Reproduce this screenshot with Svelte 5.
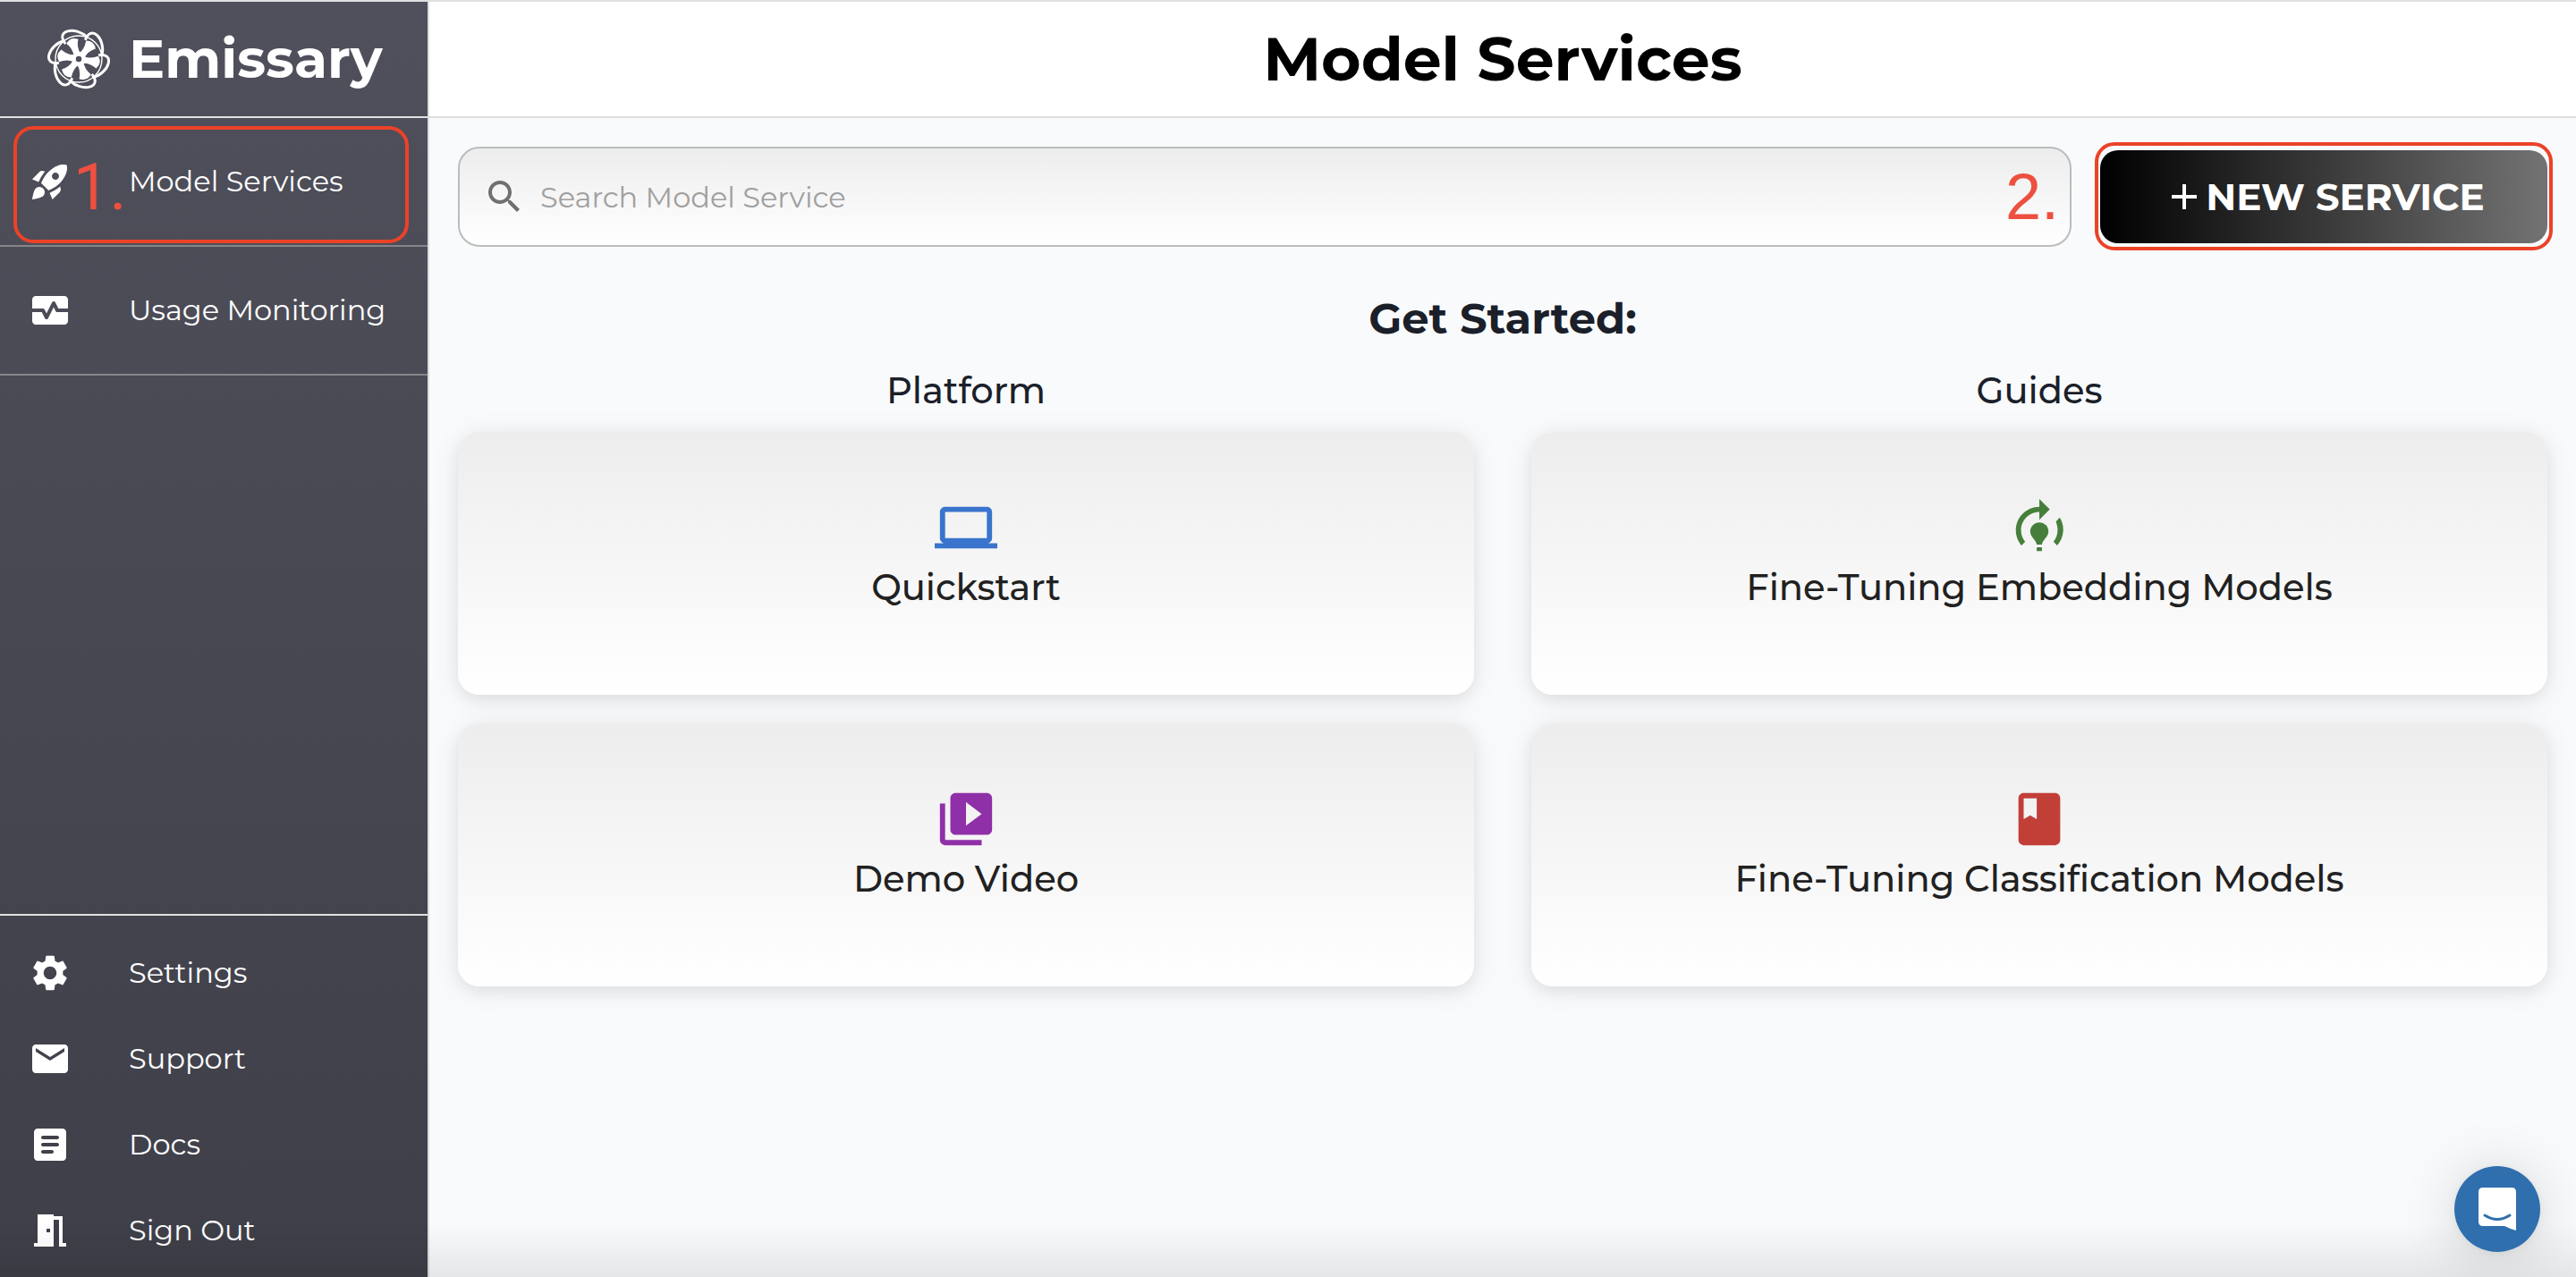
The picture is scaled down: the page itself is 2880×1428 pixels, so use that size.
<script>
  const mainLinks = [
    {
      label: 'Model Services',
      path: 'M9.19 6.35c-2.04 2.29-3.44 5.58-3.57 5.89L2 10.69l4.05-4.05c.47-.47 1.15-.68 1.81-.55l1.33.26zM11.17 17s3.74-1.55 5.89-3.7c5.4-5.4 4.5-9.62 4.21-10.57-.95-.3-5.17-1.19-10.57 4.21C8.55 9.09 7 12.83 7 12.83L11.17 17zm6.48-2.19c-2.29 2.04-5.58 3.44-5.89 3.57L13.31 22l4.05-4.05c.47-.47.68-1.15.55-1.81l-.26-1.33zM9 18c0 .83-.34 1.58-.88 2.12C6.94 21.3 2 22 2 22s.7-4.94 1.88-6.12A2.996 2.996 0 0 1 9 18zm4-9c0-1.1.9-2 2-2s2 .9 2 2-.9 2-2 2-2-.9-2-2z',
      step: '1.'
    },
    {
      label: 'Usage Monitoring',
      path: 'M15.11 12.45 14 10.24l-3.11 6.21c-.16.34-.51.55-.89.55s-.73-.21-.89-.55L7.38 13H2v5c0 1.1.9 2 2 2h16c1.1 0 2-.9 2-2v-5h-6c-.38 0-.73-.21-.89-.55zM20 4H4c-1.1 0-2 .9-2 2v5h6c.38 0 .73.21.89.55L10 13.76l3.11-6.21c.34-.68 1.45-.68 1.79 0L16.62 11H22V6c0-1.1-.9-2-2-2z'
    }
  ];

  const footerLinks = [
    {
      label: 'Settings',
      path: 'M19.14 12.94c.04-.3.06-.61.06-.94 0-.32-.02-.64-.07-.94l2.03-1.58c.18-.14.23-.41.12-.61l-1.92-3.32c-.12-.22-.37-.29-.59-.22l-2.39.96c-.5-.38-1.03-.7-1.62-.94l-.36-2.54c-.04-.24-.24-.41-.48-.41h-3.84c-.24 0-.43.17-.47.41l-.36 2.54c-.59.24-1.13.57-1.62.94l-2.39-.96c-.22-.08-.47 0-.59.22L2.74 8.87c-.12.21-.08.47.12.61l2.03 1.58c-.05.3-.09.63-.09.94s.02.64.07.94l-2.03 1.58c-.18.14-.23.41-.12.61l1.92 3.32c.12.22.37.29.59.22l2.39-.96c.5.38 1.03.7 1.62.94l.36 2.54c.05.24.24.41.48.41h3.84c.24 0 .44-.17.47-.41l.36-2.54c.59-.24 1.13-.56 1.62-.94l2.39.96c.22.08.47 0 .59-.22l1.92-3.32c.12-.22.07-.47-.12-.61l-2.01-1.58zM12 15.6c-1.98 0-3.6-1.62-3.6-3.6s1.62-3.6 3.6-3.6 3.6 1.62 3.6 3.6-1.62 3.6-3.6 3.6z'
    },
    {
      label: 'Support',
      path: 'M20 4H4c-1.1 0-1.99.9-1.99 2L2 18c0 1.1.9 2 2 2h16c1.1 0 2-.9 2-2V6c0-1.1-.9-2-2-2zm0 4-8 5-8-5V6l8 5 8-5v2z'
    },
    {
      label: 'Docs',
      path: 'M19 3H5c-1.1 0-2 .9-2 2v14c0 1.1.9 2 2 2h14c1.1 0 2-.9 2-2V5c0-1.1-.9-2-2-2zm-6 14H8c-.55 0-1-.45-1-1s.45-1 1-1h5c.55 0 1 .45 1 1s-.45 1-1 1zm3-4H8c-.55 0-1-.45-1-1s.45-1 1-1h8c.55 0 1 .45 1 1s-.45 1-1 1zm0-4H8c-.55 0-1-.45-1-1s.45-1 1-1h8c.55 0 1 .45 1 1s-.45 1-1 1z'
    },
    {
      label: 'Sign Out',
      path: 'M14 6v15H3v-2h2V3h9v1h5v15h2v2h-4V6h-3zm-4 5v2h2v-2h-2z'
    }
  ];

  const columns = [
    {
      title: 'Platform',
      cards: [
        {
          label: 'Quickstart',
          tone: 'blue',
          path: 'M20 18c1.1 0 1.99-.9 1.99-2L22 6c0-1.1-.9-2-2-2H4c-1.1 0-2 .9-2 2v10c0 1.1.9 2 2 2H0v2h24v-2h-4zM4 6h16v10H4V6z'
        },
        {
          label: 'Demo Video',
          tone: 'purple',
          path: 'M4 6H2v14c0 1.1.9 2 2 2h14v-2H4V6zm16-4H8c-1.1 0-2 .9-2 2v12c0 1.1.9 2 2 2h12c1.1 0 2-.9 2-2V4c0-1.1-.9-2-2-2zm-8 12.5v-9l6 4.5-6 4.5z'
        }
      ]
    },
    {
      title: 'Guides',
      cards: [
        {
          label: 'Fine-Tuning Embedding Models',
          tone: 'green',
          path: 'M15.5 13.5c0 2-2.5 3.5-2.5 5h-2c0-1.5-2.5-3-2.5-5 0-1.93 1.57-3.5 3.5-3.5s3.5 1.57 3.5 3.5zm-2.5 6h-2V21h2v-1.5zm6-6.5c0 1.68-.59 3.21-1.58 4.42l1.42 1.42a8.978 8.978 0 0 0 1-10.68l-1.5 1.49c.42.99.66 2.14.66 3.35zm-3-8-4-4v3c-4.97 0-9 4.03-9 9 0 2.23.82 4.27 2.16 5.84l1.42-1.42A6.938 6.938 0 0 1 5 13c0-3.86 3.14-7 7-7v3l4-4z'
        },
        {
          label: 'Fine-Tuning Classification Models',
          tone: 'red',
          path: 'M18 2H6c-1.1 0-2 .9-2 2v16c0 1.1.9 2 2 2h12c1.1 0 2-.9 2-2V4c0-1.1-.9-2-2-2zM6 4h5v8l-2.5-1.5L6 12V4z'
        }
      ]
    }
  ];

  const petals = [-20, 40, 100, 160, 220, 280];
  let query = $state('');
</script>

<div class="app">
  <aside class="sidebar">
    <div class="brand">
      <svg class="logo" viewBox="-36 -36 72 72" aria-hidden="true">
        <circle r="26" fill="none" stroke="currentColor" stroke-width="1.4" />
        {#each petals as angle}
          <g transform="rotate({angle})">
            <path d="M-4 -5Q-2 -13 -7 -21Q0 -27 7 -21Q2 -13 4 -5Z" fill="currentColor" />
            <path
              d="M-8 -21C-11 -29 -8 -34 -1 -33.5C6 -33 14 -27 17 -20"
              fill="none"
              stroke="currentColor"
              stroke-width="3"
            />
          </g>
        {/each}
        <circle r="5.5" fill="none" stroke="currentColor" stroke-width="4.5" />
      </svg>
      <span class="brand-name">Emissary</span>
    </div>

    <nav class="nav-main" aria-label="Main">
      {#each mainLinks as link}
        <a class="nav-link" href="#top">
          <svg class="icon" viewBox="0 0 24 24" aria-hidden="true"><path d={link.path} /></svg>
          <span>{link.label}</span>
          {#if link.step}
            <span class="step-frame nav-frame"></span>
            <span class="step nav-step">{link.step}</span>
          {/if}
        </a>
      {/each}
    </nav>

    <nav class="nav-footer" aria-label="Account">
      {#each footerLinks as link}
        <a class="nav-link small" href="#top">
          <svg class="icon" viewBox="0 0 24 24" aria-hidden="true"><path d={link.path} /></svg>
          <span>{link.label}</span>
        </a>
      {/each}
    </nav>
  </aside>

  <div class="page">
    <header class="page-header"><h1>Model Services</h1></header>

    <main class="content">
      <div class="toolbar">
        <label class="search">
          <svg class="icon" viewBox="0 0 24 24" aria-hidden="true">
            <path d="M15.5 14h-.79l-.28-.27C15.41 12.59 16 11.11 16 9.5 16 5.91 13.09 3 9.5 3S3 5.91 3 9.5 5.91 16 9.5 16c1.61 0 3.09-.59 4.23-1.57l.27.28v.79l5 4.99L20.49 19l-4.99-5zm-6 0C7.01 14 5 11.99 5 9.5S7.01 5 9.5 5 14 7.01 14 9.5 11.99 14 9.5 14z" />
          </svg>
          <input
            type="text"
            placeholder="Search Model Service"
            aria-label="Search Model Service"
            bind:value={query}
          />
          <span class="step search-step">2.</span>
        </label>
        <button class="new-service" type="button">
          <svg class="icon" viewBox="0 0 24 24" aria-hidden="true">
            <path d="M19 13h-6v6h-2v-6H5v-2h6V5h2v6h6v2z" />
          </svg>
          <span>NEW SERVICE</span>
          <span class="step-frame button-frame"></span>
        </button>
      </div>

      <h2>Get Started:</h2>

      <div class="columns">
        {#each columns as column}
          <section class="column">
            <h3>{column.title}</h3>
            {#each column.cards as card}
              <a class="card" href="#top">
                <svg class="card-icon {card.tone}" viewBox="0 0 24 24" aria-hidden="true">
                  <path d={card.path} />
                </svg>
                <span>{card.label}</span>
              </a>
            {/each}
          </section>
        {/each}
      </div>
    </main>
  </div>

  <div class="bottom-shade"></div>
  <button class="chat" type="button" aria-label="Open chat">
    <svg viewBox="0 0 42 48" aria-hidden="true">
      <path d="M5 0H37Q42 0 42 5V48Q35 46 29 43H5Q0 43 0 38V5Q0 0 5 0Z" fill="#fff" />
      <path d="M7 31Q21 40 35 31" fill="none" stroke="#2f6fae" stroke-width="3" stroke-linecap="round" />
    </svg>
  </button>
</div>

<style>
  :global(body) {
    margin: 0;
  }

  .app {
    display: flex;
    min-height: 100vh;
    box-sizing: border-box;
    border-top: 2px solid #e0e1e1;
    background: #f9fafc;
    color: #1b1f2a;
    font-family: Montserrat, Inter, sans-serif;
  }

  a {
    color: inherit;
    text-decoration: none;
  }

  h1,
  h2,
  h3 {
    margin: 0;
    text-align: center;
  }

  .icon {
    flex: none;
    width: 48px;
    height: 48px;
    fill: currentColor;
  }

  .sidebar {
    display: flex;
    flex: none;
    flex-direction: column;
    width: 478px;
    border-right: 2px solid #dcdddf;
    background: linear-gradient(#4f505b, #3f3f49);
    color: #fff;
  }

  .brand {
    display: flex;
    align-items: center;
    gap: 20px;
    height: 128px;
    padding-left: 52px;
    border-bottom: 2px solid #dfe3e1;
  }

  .logo {
    width: 72px;
    height: 72px;
  }

  .brand-name {
    font-size: 60px;
    font-weight: 700;
    line-height: 72px;
  }

  .nav-link {
    position: relative;
    display: flex;
    align-items: center;
    gap: 64px;
    height: 142px;
    padding-left: 32px;
    border-bottom: 2px solid #85858a;
    font-size: 32px;
    font-weight: 400;
    line-height: 40px;
    white-space: nowrap;
  }

  .nav-link.small {
    height: 96px;
    border-bottom: 0;
  }

  .nav-footer {
    margin-top: auto;
    padding: 16px 0 4px;
    border-top: 2px solid #dfe3e1;
  }

  .page {
    flex: 1;
    min-width: 0;
  }

  .page-header {
    display: flex;
    align-items: center;
    justify-content: center;
    height: 128px;
    border-bottom: 2px solid #dcdddf;
    background: #fff;
  }

  h1 {
    color: #000;
    font-size: 68px;
    font-weight: 700;
    line-height: 80px;
  }

  .content {
    padding: 32px;
  }

  .toolbar {
    display: flex;
    align-items: center;
    gap: 32px;
  }

  .search {
    position: relative;
    display: flex;
    flex: 1;
    align-items: center;
    gap: 16px;
    height: 112px;
    box-sizing: border-box;
    padding: 0 26px;
    border: 2px solid #bbbcbd;
    border-radius: 24px;
    background: linear-gradient(#ededed, #fff);
    color: #6f7070;
  }

  .search input {
    flex: 1;
    min-width: 0;
    height: 40px;
    padding: 0;
    border: 0;
    outline: 0;
    background: none;
    color: #222;
    font: inherit;
    font-size: 32px;
    font-weight: 400;
  }

  .search input::placeholder {
    color: #a0a0a0;
    opacity: 1;
  }

  .new-service {
    position: relative;
    display: flex;
    align-items: center;
    justify-content: center;
    width: 500px;
    height: 104px;
    padding: 0;
    border: 0;
    border-radius: 20px;
    background: linear-gradient(90deg, #000, #737373);
    color: #fff;
    font: inherit;
    font-size: 42px;
    font-weight: 700;
    white-space: nowrap;
  }

  h2 {
    margin: 48px 0 19px;
    font-size: 48px;
    font-weight: 700;
    line-height: 64px;
  }

  .columns {
    display: grid;
    grid-template-columns: 1fr 1fr;
    gap: 64px;
  }

  .column {
    display: flex;
    flex-direction: column;
    gap: 32px;
  }

  h3 {
    margin-bottom: -16px;
    font-size: 40px;
    font-weight: 500;
    line-height: 60px;
  }

  .card {
    display: flex;
    flex-direction: column;
    align-items: center;
    height: 222px;
    padding-top: 72px;
    border-radius: 24px;
    background: linear-gradient(#ededed, #fff);
    box-shadow: 0 4px 32px rgba(0, 0, 0, 0.08), 0 6px 16px rgba(0, 0, 0, 0.06);
    color: #212121;
    font-size: 40px;
    font-weight: 500;
    line-height: 64px;
  }

  .card-icon {
    width: 70px;
    height: 70px;
    fill: currentColor;
  }

  .blue {
    color: #3974cd;
  }

  .purple {
    color: #8f30a8;
  }

  .green {
    color: #467f3c;
  }

  .red {
    color: #c23f38;
  }

  /* Tutorial step markers laid over the controls */
  .step-frame {
    position: absolute;
    box-sizing: border-box;
    border: 4px solid #eb4228;
    border-radius: 22px;
    pointer-events: none;
  }

  .nav-frame {
    inset: 9px 21px 2px 15px;
  }

  .button-frame {
    inset: -9px -6px -8px;
  }

  .step {
    position: absolute;
    color: #ed5040;
    font-family: 'Liberation Sans', sans-serif;
    font-size: 72px;
    font-weight: 400;
    line-height: 80px;
    pointer-events: none;
  }

  .nav-step {
    top: 38px;
    left: 82px;
    font-family: Roboto, sans-serif;
  }

  .search-step {
    top: 14px;
    right: 12px;
  }

  .bottom-shade {
    position: fixed;
    inset: auto 0 0;
    height: 60px;
    background: linear-gradient(rgba(0, 0, 0, 0), rgba(0, 0, 0, 0.08));
    pointer-events: none;
  }

  .chat {
    position: fixed;
    right: 40px;
    bottom: 28px;
    display: flex;
    align-items: center;
    justify-content: center;
    width: 96px;
    height: 96px;
    padding: 0;
    border: 0;
    border-radius: 50%;
    background: #2f6fae;
    box-shadow: 0 4px 64px rgba(0, 0, 0, 0.16), 0 2px 12px rgba(0, 0, 0, 0.06);
  }

  .chat svg {
    width: 42px;
    height: 48px;
  }
</style>
